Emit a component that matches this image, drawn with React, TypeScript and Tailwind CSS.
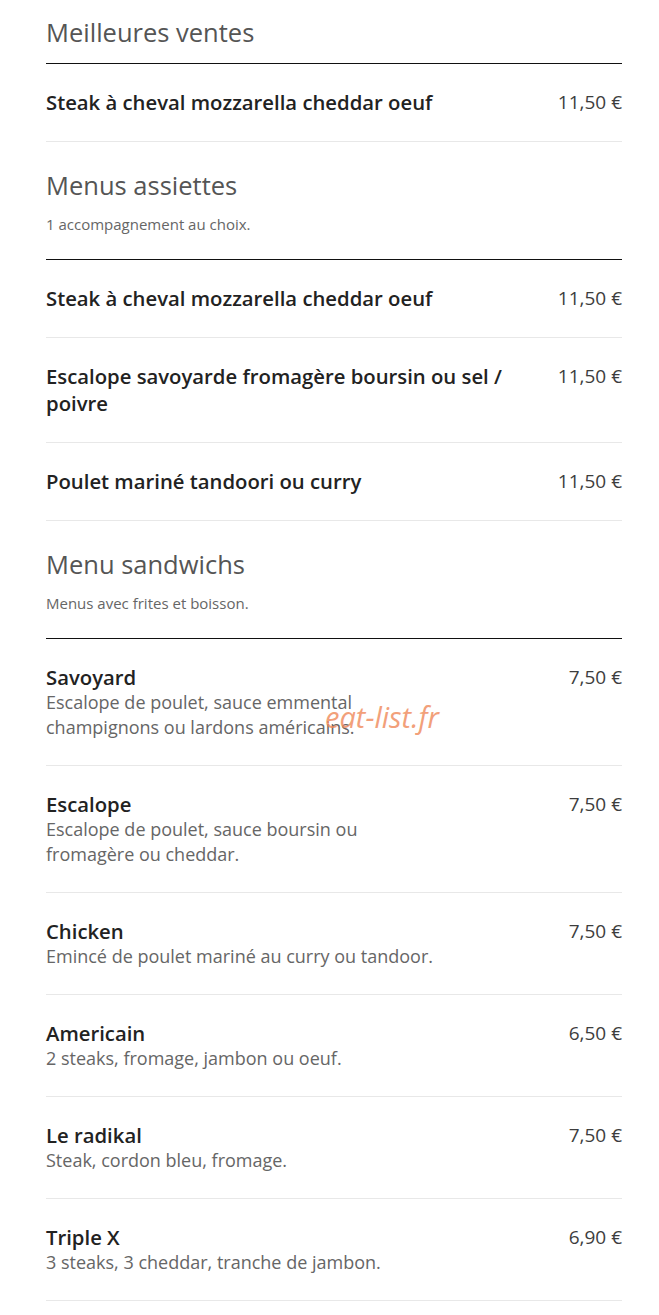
import React from 'react';

type Item = {
  name: string;
  price: string;
  desc?: string;
};

type Section = {
  title: string;
  note?: string;
  items: Item[];
};

const sections: Section[] = [
  {
    title: 'Meilleures ventes',
    items: [{ name: 'Steak à cheval mozzarella cheddar oeuf', price: '11,50 €' }],
  },
  {
    title: 'Menus assiettes',
    note: '1 accompagnement au choix.',
    items: [
      { name: 'Steak à cheval mozzarella cheddar oeuf', price: '11,50 €' },
      { name: 'Escalope savoyarde fromagère boursin ou sel / poivre', price: '11,50 €' },
      { name: 'Poulet mariné tandoori ou curry', price: '11,50 €' },
    ],
  },
  {
    title: 'Menu sandwichs',
    note: 'Menus avec frites et boisson.',
    items: [
      {
        name: 'Savoyard',
        price: '7,50 €',
        desc: 'Escalope de poulet, sauce emmental champignons ou lardons américains.',
      },
      {
        name: 'Escalope',
        price: '7,50 €',
        desc: 'Escalope de poulet, sauce boursin ou fromagère ou cheddar.',
      },
      { name: 'Chicken', price: '7,50 €', desc: 'Emincé de poulet mariné au curry ou tandoor.' },
      { name: 'Americain', price: '6,50 €', desc: '2 steaks, fromage, jambon ou oeuf.' },
      { name: 'Le radikal', price: '7,50 €', desc: 'Steak, cordon bleu, fromage.' },
      { name: 'Triple X', price: '6,90 €', desc: '3 steaks, 3 cheddar, tranche de jambon.' },
    ],
  },
];

const MenuRow: React.FC<{ item: Item }> = ({ item }) => (
  <div className="flex items-start justify-between border-b border-[#e8e8e8] pt-[25px] pb-[25px]">
    <div className="flex-1">
      <div
        className={`max-w-[480px] text-[20.3px] font-semibold text-[#222] ${
          item.desc ? 'leading-[26px]' : 'leading-[27px]'
        }`}
      >
        {item.name}
      </div>
      {item.desc && (
        <div className="max-w-[396px] text-[18px] leading-[25px] text-[#666]">{item.desc}</div>
      )}
    </div>
    <div
      className={`shrink-0 pl-4 text-[19px] text-[#3d3d3d] ${
        item.desc ? 'leading-[26px]' : 'leading-[27px]'
      }`}
    >
      {item.price}
    </div>
  </div>
);

export default function App() {
  return (
    <div
      className="relative min-h-[1315px] bg-white pl-[46px] pr-[37px]"
      style={{ fontFamily: '"Open Sans", "Noto Sans", sans-serif' }}
    >
      {sections.map((section, i) => (
        <div key={section.title}>
          <div
            className={`border-b border-[#111] ${
              i === 0 ? 'pt-[16px] pb-[15px]' : 'pt-[27px] pb-[25px]'
            }`}
          >
            <h2 className="text-[25.5px] leading-[32px] text-[#555]">{section.title}</h2>
            {section.note && (
              <p className="mt-[13px] text-[15px] leading-[20px] text-[#666]">{section.note}</p>
            )}
          </div>
          {section.items.map((item) => (
            <MenuRow key={item.name} item={item} />
          ))}
        </div>
      ))}

      {/* watermark */}
      <div className="pointer-events-none absolute left-[325px] top-[700px] text-[29px] italic leading-[34px] text-[#f0895a] opacity-80">
        eat-list.fr
      </div>
    </div>
  );
}
